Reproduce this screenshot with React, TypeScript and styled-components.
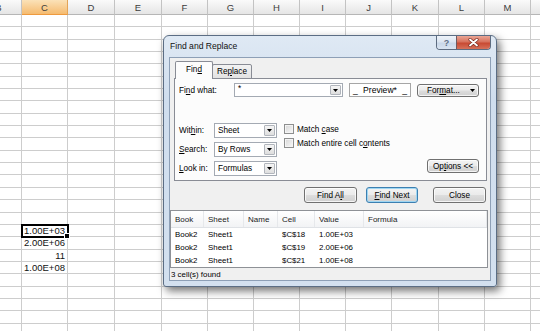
import React from 'react';
import styled, {createGlobalStyle, css} from 'styled-components';

const GlobalStyle = createGlobalStyle`
  html, body {
    margin: 0;
    padding: 0;
    background: #fff;
  }
  body {
    font-family: "Liberation Sans", Arial, sans-serif;
  }
`;

const COLS = ['B', 'C', 'D', 'E', 'F', 'G', 'H', 'I', 'J', 'K', 'L', 'M', ''];
const WIDTHS = [46, 46, 47, 47, 46, 46, 46, 46, 46, 47, 46, 46, 46];
const ROW_COUNT = 26;
const VALUES: Record<number, string> = {17: '1.00E+03', 18: '2.00E+06', 19: '11', 20: '1.00E+08'};

const Screen = styled.div`
  position: relative;
  width: 540px;
  height: 331px;
  overflow: hidden;
  background: #fff;
`;

const Sheet = styled.div`
  display: grid;
  grid-template-columns: ${WIDTHS.map(w => w + 'px').join(' ')};
  grid-template-rows: 15px;
  grid-auto-rows: 12.35px;
  margin-left: -24px;
`;

const HeadCell = styled.div<{$active?: boolean}>`
  box-sizing: border-box;
  display: flex;
  align-items: center;
  justify-content: center;
  font-size: 9.5px;
  color: #3c3c3c;
  background: ${p => p.$active ? 'linear-gradient(#fbe2b8, #f5bb70)' : 'linear-gradient(#fafafa, #e5e5e5)'};
  border-right: 1px solid ${p => p.$active ? '#e3a457' : '#c3c3c3'};
  border-bottom: 1px solid ${p => p.$active ? '#ee9a3e' : '#b6b6b6'};
`;

const Cell = styled.div<{$selected?: boolean}>`
  box-sizing: border-box;
  position: relative;
  display: flex;
  align-items: center;
  justify-content: flex-end;
  padding-right: 2px;
  font-size: 9.5px;
  color: #111;
  border-right: 1px solid #cdcdcd;
  border-bottom: 1px solid #cdcdcd;
  ${p => p.$selected && css`
    outline: 2px solid #000;
    outline-offset: -1px;
    z-index: 1;

    &::after {
      content: '';
      position: absolute;
      right: -3px;
      bottom: -3px;
      width: 4px;
      height: 4px;
      background: #000;
      border: 1px solid #fff;
    }
  `}
`;

const Dialog = styled.div`
  position: absolute;
  left: 163px;
  top: 35px;
  width: 334px;
  height: 252px;
  box-sizing: border-box;
  border: 1px solid #5b6d84;
  border-radius: 6px 6px 3px 3px;
  background: linear-gradient(180deg, #dfe9f4 0%, #d0deee 25%, #d3e0ef 100%);
  box-shadow: 3px 4px 9px rgba(0, 0, 0, 0.55);
  padding: 0 5px 5px;
  display: flex;
  flex-direction: column;
  font-size: 8.2px;
  color: #000;
`;

const TitleBar = styled.div`
  height: 21px;
  display: flex;
  align-items: flex-start;
`;

const Title = styled.div`
  margin-left: 1px;
  line-height: 21px;
  font-size: 8.6px;
  color: #111;
`;

const Caption = styled.div`
  margin-left: auto;
  display: flex;
  height: 13px;
  border: 1px solid #5d6c80;
  border-top: none;
  border-radius: 0 0 4px 4px;
  overflow: hidden;
`;

const CapBtn = styled.div<{$close?: boolean}>`
  width: ${p => p.$close ? 33 : 19}px;
  display: flex;
  align-items: center;
  justify-content: center;
  font-size: 9px;
  font-weight: bold;
  color: #5f6f86;
  background: ${p => p.$close
    ? 'linear-gradient(#eaa594 0%, #d7715c 45%, #c84a33 55%, #d6715a 100%)'
    : 'linear-gradient(#eef3f9 0%, #dbe5f1 45%, #c9d7e8 55%, #d9e4f1 100%)'};
  & + & {
    border-left: 1px solid #6f5a60;
  }
`;

const Client = styled.div`
  flex: 1;
  border: 1px solid #8d9fb6;
  background: #f0f0f0;
  display: flex;
  flex-direction: column;
`;

const TabStrip = styled.div`
  display: flex;
  align-items: flex-end;
  padding: 3px 0 0 5px;
  height: 18px;
  margin-bottom: -1px;
  position: relative;
  z-index: 1;
`;

const Tab = styled.div<{$active?: boolean}>`
  box-sizing: border-box;
  display: flex;
  align-items: center;
  justify-content: center;
  border: 1px solid #898c95;
  border-bottom: ${p => p.$active ? 'none' : '1px solid #898c95'};
  border-radius: 2px 2px 0 0;
  ${p => p.$active ? css`
    width: 38px;
    height: 18px;
    background: #fcfcfc;
    padding-bottom: 2px;
  ` : css`
    width: 40px;
    height: 15px;
    margin-left: -1px;
    background: linear-gradient(#f3f3f3, #e2e2e2);
  `}
`;

const Panel = styled.div`
  box-sizing: border-box;
  margin-left: 4px;
  width: 313px;
  height: 103px;
  border: 1px solid #898c95;
  background: #fcfcfc;
  padding: 4px 7px 4px 4px;
  display: flex;
  flex-direction: column;
`;

const FindRow = styled.div`
  display: flex;
  align-items: center;
  height: 14px;
`;

const Label = styled.div<{$w: number}>`
  width: ${p => p.$w}px;
  flex: none;
  white-space: nowrap;
`;

const Combo = styled.div<{$w: number; $h?: number}>`
  box-sizing: border-box;
  width: ${p => p.$w}px;
  height: ${p => p.$h ?? 15}px;
  border: 1px solid #a4aab3;
  background: #fff;
  display: flex;
  align-items: center;
  padding-left: 3px;
  flex: none;
`;

const ComboText = styled.span<{$top?: boolean}>`
  align-self: ${p => p.$top ? 'flex-start' : 'center'};
  line-height: ${p => p.$top ? '9px' : 'normal'};
`;

const DropBtn = styled.span`
  box-sizing: border-box;
  margin-left: auto;
  width: 11px;
  height: calc(100% - 2px);
  margin-right: 1px;
  border: 1px solid #b1b5bc;
  border-radius: 1px;
  background: linear-gradient(#f5f5f5, #dedede);
  display: flex;
  align-items: center;
  justify-content: center;
`;

const Preview = styled.div`
  box-sizing: border-box;
  margin-left: 6px;
  width: 63px;
  height: 14px;
  border: 1px solid #a6a6a6;
  background: #fff;
  display: flex;
  align-items: center;
  justify-content: space-between;
  padding: 0 3px;
  font-size: 8.6px;
`;

const Button = styled.div<{$w: number; $default?: boolean}>`
  box-sizing: border-box;
  width: ${p => p.$w}px;
  height: ${p => p.$default !== undefined ? 16 : 14}px;
  flex: none;
  display: flex;
  align-items: center;
  justify-content: center;
  border: 1px solid ${p => p.$default ? '#3c7fb1' : '#707070'};
  border-radius: 3px;
  background: linear-gradient(#f3f3f3 0%, #ebebeb 48%, #dddddd 52%, #d0d0d0 100%);
  box-shadow: inset 0 0 0 1px ${p => p.$default ? '#9fd6f2' : 'rgba(255, 255, 255, 0.75)'};
`;

const FormatButton = styled(Button)`
  margin-left: 6px;
  height: 13px;
  justify-content: flex-start;
  padding: 0 3px 0 9px;

  > svg {
    margin-left: auto;
  }
`;

const Lower = styled.div`
  display: flex;
  margin-top: 26px;
  flex: 1;
`;

const Fields = styled.div`
  display: grid;
  grid-template-columns: 35px 63px;
  grid-auto-rows: 15px;
  row-gap: 4px;
  align-items: center;
`;

const Checks = styled.div`
  display: flex;
  flex-direction: column;
  margin: -1px 0 0 7px;
`;

const CheckRow = styled.div`
  display: flex;
  align-items: center;
  height: 14px;
  gap: 3px;
`;

const Box = styled.span`
  box-sizing: border-box;
  width: 10px;
  height: 10px;
  border: 1px solid #8e8f8f;
  background: linear-gradient(135deg, #d6d6d6, #f9f9f9);
  box-shadow: inset 0 0 0 1px #f4f4f4;
`;

const OptionsButton = styled(Button)`
  margin: 0 0 3px auto;
  align-self: flex-end;
`;

const ButtonRow = styled.div`
  display: flex;
  justify-content: flex-end;
  padding-right: 4px;
  margin-top: 6px;
  gap: 9px;

  > :last-child {
    margin-left: 6px;
  }
`;

const Results = styled.div`
  box-sizing: border-box;
  margin-top: 7px;
  width: 318px;
  height: 58px;
  border: 1px solid #8e9196;
  background: #fff;
  overflow: hidden;
  font-size: 7.9px;
`;

const ResultRow = styled.div<{$head?: boolean}>`
  display: grid;
  grid-template-columns: 33px 40px 34px 37px 49px 1fr;
  height: ${p => p.$head ? 17 : 13}px;
  align-items: center;
  ${p => p.$head && css`
    background: linear-gradient(#ffffff, #f2f3f5);
    border-bottom: 1px solid #dfe2e6;
    box-sizing: border-box;
    font-size: 8px;
    color: #1b1b1b;
  `}

  > span {
    padding-left: 4px;
    white-space: nowrap;
    ${p => p.$head && css`
      height: 100%;
      display: flex;
      align-items: center;
      border-right: 1px solid #e6e8eb;
    `}
  }
`;

const Status = styled.div`
  height: 12px;
  display: flex;
  align-items: center;
  padding-left: 1px;
  font-size: 7.9px;
`;

const Arrow = () => (
  <svg width="5" height="3" viewBox="0 0 5 3">
    <polygon points="0,0 5,0 2.5,3" fill="#000" />
  </svg>
);

const CloseGlyph = () => (
  <svg width="11" height="9" viewBox="0 0 11 9">
    <path d="M2 1.5 L9 7.5 M9 1.5 L2 7.5" stroke="#7a2a20" strokeWidth="3.2" strokeLinecap="round" />
    <path d="M2 1.5 L9 7.5 M9 1.5 L2 7.5" stroke="#fff" strokeWidth="1.8" strokeLinecap="round" />
  </svg>
);

const Select: React.FC<{value: string}> = ({value}) => (
  <Combo $w={63}>
    <span>{value}</span>
    <DropBtn><Arrow /></DropBtn>
  </Combo>
);

const results = [
  ['Book2', 'Sheet1', '', '$C$18', '1.00E+03', ''],
  ['Book2', 'Sheet1', '', '$C$19', '2.00E+06', ''],
  ['Book2', 'Sheet1', '', '$C$21', '1.00E+08', ''],
];

const App: React.FC = () => {
  const rows = Array.from({length: ROW_COUNT}, (_, r) => r);
  return (
    <Screen>
      <GlobalStyle />
      <Sheet>
        {COLS.map((c, i) => <HeadCell key={i} $active={c === 'C'}>{c}</HeadCell>)}
        {rows.map(r => COLS.map((c, i) => (
          <Cell key={i + '-' + r} $selected={i === 1 && r === 17}>
            {i === 1 ? VALUES[r] : null}
          </Cell>
        )))}
      </Sheet>

      <Dialog>
        <TitleBar>
          <Title>Find and Replace</Title>
          <Caption>
            <CapBtn>?</CapBtn>
            <CapBtn $close><CloseGlyph /></CapBtn>
          </Caption>
        </TitleBar>
        <Client>
          <TabStrip>
            <Tab $active>Fin<u>d</u></Tab>
            <Tab>Re<u>p</u>lace</Tab>
          </TabStrip>
          <Panel>
            <FindRow>
              <Label $w={55}>Fi<u>n</u>d what:</Label>
              <Combo $w={109} $h={14}>
                <ComboText $top>*</ComboText>
                <DropBtn><Arrow /></DropBtn>
              </Combo>
              <Preview><span>_</span><span>Preview*</span><span>_</span></Preview>
              <FormatButton $w={62}><span>For<u>m</u>at...</span><Arrow /></FormatButton>
            </FindRow>
            <Lower>
              <Fields>
                <Label $w={35}>Wit<u>h</u>in:</Label>
                <Select value="Sheet" />
                <Label $w={35}><u>S</u>earch:</Label>
                <Select value="By Rows" />
                <Label $w={35}><u>L</u>ook in:</Label>
                <Select value="Formulas" />
              </Fields>
              <Checks>
                <CheckRow><Box /><span>Match <u>c</u>ase</span></CheckRow>
                <CheckRow><Box /><span>Match entire cell c<u>o</u>ntents</span></CheckRow>
              </Checks>
              <OptionsButton $w={52}><span>Op<u>t</u>ions &lt;&lt;</span></OptionsButton>
            </Lower>
          </Panel>
          <ButtonRow>
            <Button $w={53} $default={false}><span>Find A<u>l</u>l</span></Button>
            <Button $w={52} $default><span><u>F</u>ind Next</span></Button>
            <Button $w={53} $default={false}>Close</Button>
          </ButtonRow>
          <Results>
            <ResultRow $head>
              <span>Book</span><span>Sheet</span><span>Name</span><span>Cell</span><span>Value</span><span>Formula</span>
            </ResultRow>
            {results.map((row, i) => (
              <ResultRow key={i}>
                {row.map((v, j) => <span key={j}>{v}</span>)}
              </ResultRow>
            ))}
          </Results>
          <Status>3 cell(s) found</Status>
        </Client>
      </Dialog>
    </Screen>
  );
};

export default App;
